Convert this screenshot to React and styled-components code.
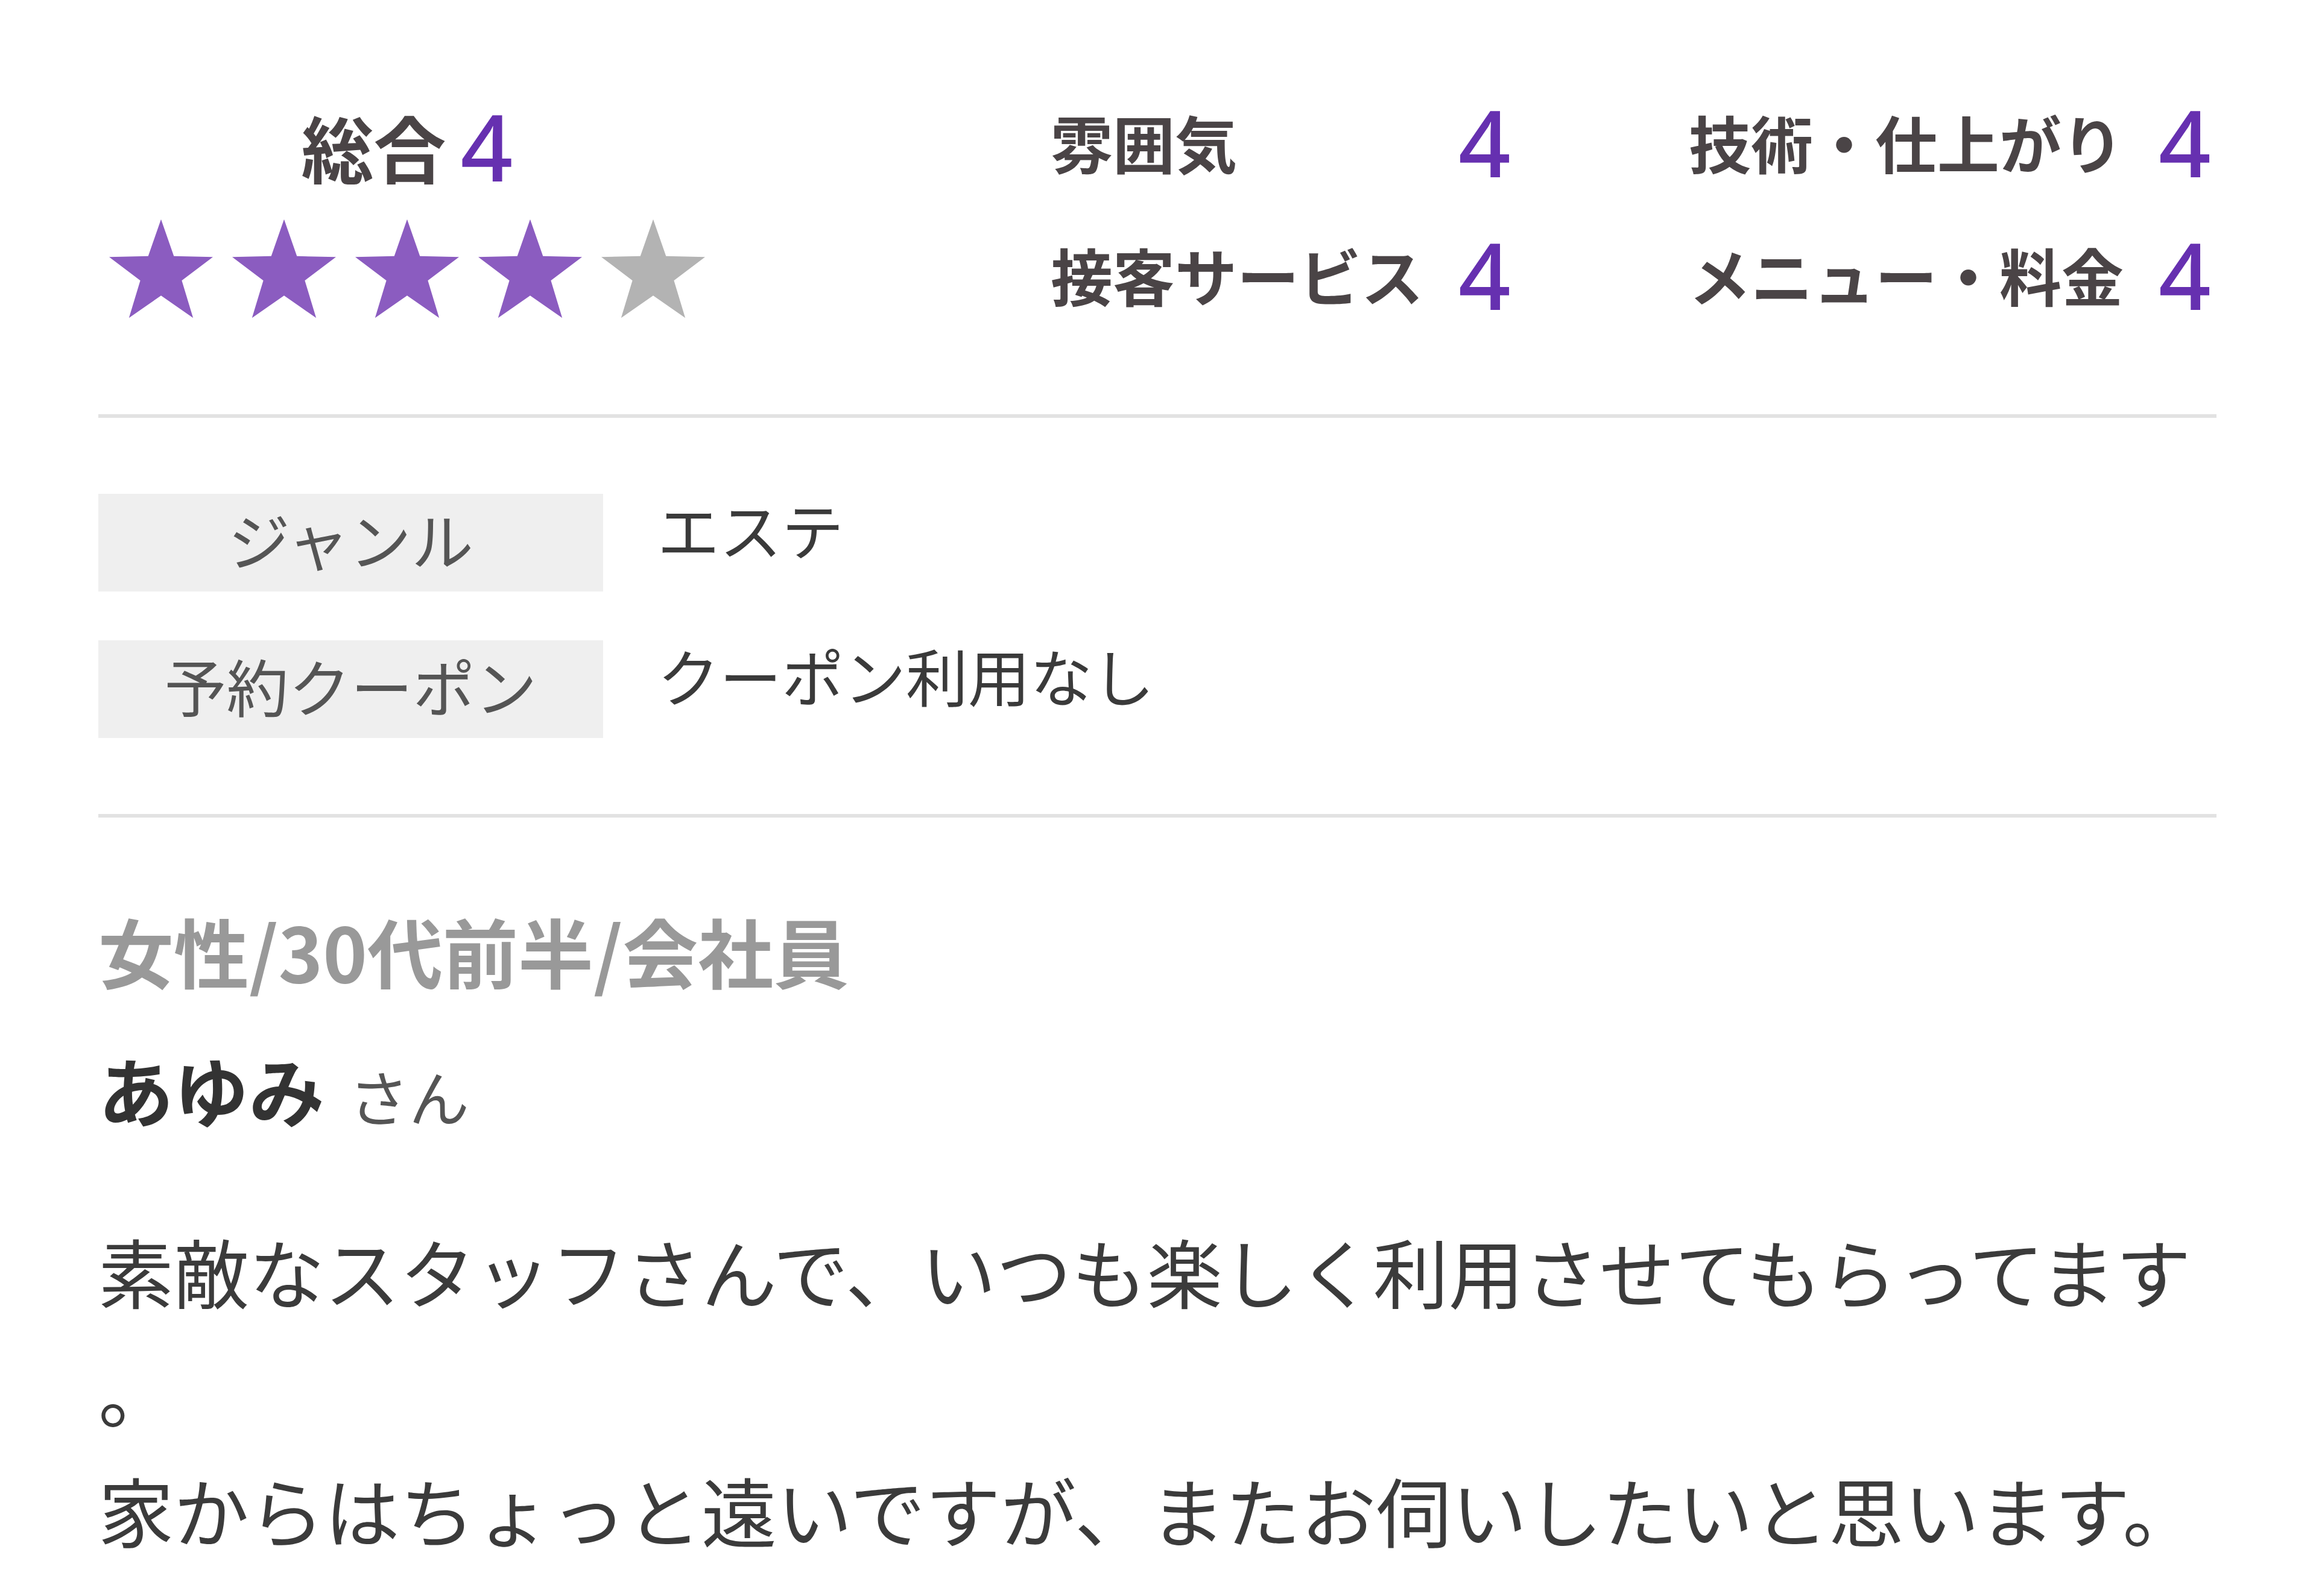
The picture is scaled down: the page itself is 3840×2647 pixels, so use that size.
import React from 'react';
import styled, { createGlobalStyle } from 'styled-components';

const GlobalStyle = createGlobalStyle`
  html, body {
    margin: 0;
    padding: 0;
    background: #fff;
  }

  body {
    font-family: "Noto Sans CJK JP", "Noto Sans", sans-serif;
    color: #333;
  }
`

const Page = styled.main`
  padding: 0 165px 54px 163px;
`

/* Ratings */

const Summary = styled.section`
  display: flex;
  justify-content: space-between;
  align-items: flex-start;
  padding: 156px 0 151px;
  border-bottom: 6px solid #e2e2e2;
`

const Overall = styled.div`
  width: 1024px;
  display: flex;
  flex-direction: column;
  align-items: center;
  padding-top: 17px;
`

const OverallTitle = styled.div`
  height: 140px;
  display: flex;
  align-items: center;
  gap: 24px;
  font-size: 120px;
  font-weight: 700;
  color: #4a4446;
  line-height: 140px;
`

const Score = styled.span`
  font-family: "Noto Sans", sans-serif;
  font-size: 152px;
  font-weight: 500;
  color: #6630b0;
  line-height: 140px;
`

const Stars = styled.div`
  display: flex;
  gap: 32px;
  margin-top: 50px;
`

const Criteria = styled.div`
  display: grid;
  grid-template-columns: auto auto;
  column-gap: 295px;
  row-gap: 60px;
  margin-right: 9px;
`

const Criterion = styled.div`
  display: flex;
  justify-content: space-between;
  align-items: center;
  gap: 58px;
  height: 160px;
`

const CriterionLabel = styled.span`
  font-size: 103px;
  font-weight: 700;
  color: #4a4446;
  line-height: 160px;
`

/* Details table */

const Details = styled.dl`
  margin: 0;
  padding: 126px 0;
  display: flex;
  flex-direction: column;
  gap: 81px;
  border-bottom: 6px solid #e2e2e2;
`

const DetailRow = styled.div`
  display: flex;
  align-items: flex-start;
  gap: 90px;
`

const DetailLabel = styled.dt`
  box-sizing: border-box;
  width: 837px;
  height: 162px;
  background: #efefef;
  text-align: center;
  font-size: 103px;
  line-height: 150px;
  color: #555;
`

const DetailValue = styled.dd`
  margin: 0;
  font-size: 103px;
  line-height: 116px;
  color: #3a3a3a;
`

/* Review */

const Review = styled.section`
  padding-top: 140px;
`

const Profile = styled.p`
  margin: 0;
  font-size: 125px;
  font-weight: 700;
  line-height: 160px;
  color: #999;
`

const Name = styled.p`
  margin: 70px 0 0;
  font-size: 125px;
  font-weight: 700;
  line-height: 160px;
  color: #333;
`

const Honorific = styled.span`
  margin-left: 40px;
  font-size: 100px;
  font-weight: 400;
  color: #555;
`

const Body = styled.p`
  margin: 111px 0 0;
  font-size: 125px;
  line-height: 198px;
  color: #3b3b3b;
  line-break: anywhere;
`

function starPoints() {
  const cx = 47.55
  const cy = 50
  const pts = []
  for (let i = 0; i < 10; i++) {
    const a = (-90 + i * 36) * Math.PI / 180
    const rad = i % 2 === 0 ? 50 : 20
    pts.push(`${(cx + rad * Math.cos(a)).toFixed(2)},${(cy + rad * Math.sin(a)).toFixed(2)}`)
  }
  return pts.join(' ')
}

const STAR = starPoints()

function Star({ filled }) {
  return (
    <svg width="172" height="165" viewBox="0 0 95.1 90.5">
      <polygon points={STAR} fill={filled ? '#8b5cc0' : '#b3b3b3'} />
    </svg>
  )
}

const criteria = [
  { label: '雰囲気', score: 4 },
  { label: '技術・仕上がり', score: 4 },
  { label: '接客サービス', score: 4 },
  { label: 'メニュー・料金', score: 4 },
]

const details = [
  { label: 'ジャンル', value: 'エステ' },
  { label: '予約クーポン', value: 'クーポン利用なし' },
]

export default function App() {
  const overall = 4

  return (
    <Page>
      <GlobalStyle />
      <Summary>
        <Overall>
          <OverallTitle>
            総合<Score>{overall}</Score>
          </OverallTitle>
          <Stars>
            {[1, 2, 3, 4, 5].map((n) => (
              <Star key={n} filled={n <= overall} />
            ))}
          </Stars>
        </Overall>
        <Criteria>
          {criteria.map((c) => (
            <Criterion key={c.label}>
              <CriterionLabel>{c.label}</CriterionLabel>
              <Score>{c.score}</Score>
            </Criterion>
          ))}
        </Criteria>
      </Summary>

      <Details>
        {details.map((d) => (
          <DetailRow key={d.label}>
            <DetailLabel>{d.label}</DetailLabel>
            <DetailValue>{d.value}</DetailValue>
          </DetailRow>
        ))}
      </Details>

      <Review>
        <Profile>女性/30代前半/会社員</Profile>
        <Name>
          あゆみ<Honorific>さん</Honorific>
        </Name>
        <Body>
          素敵なスタッフさんで、いつも楽しく利用させてもらってます。
          <br />
          家からはちょっと遠いですが、またお伺いしたいと思います。
        </Body>
      </Review>
    </Page>
  )
}
